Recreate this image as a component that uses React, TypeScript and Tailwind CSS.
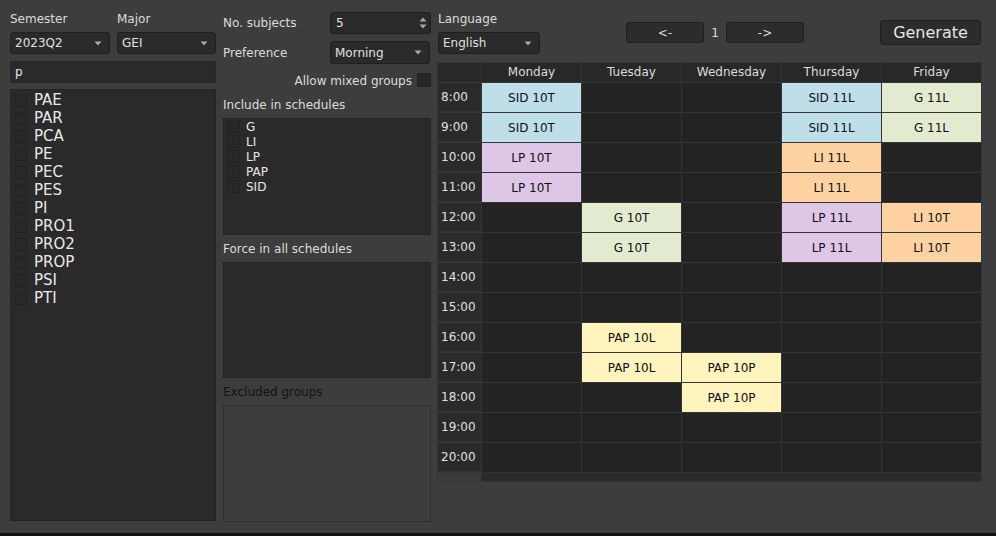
import React from "react";

const hours = ["8:00", "9:00", "10:00", "11:00", "12:00", "13:00", "14:00", "15:00", "16:00", "17:00", "18:00", "19:00", "20:00"];
const days = ["Monday", "Tuesday", "Wednesday", "Thursday", "Friday"];

const colors: Record<string, string> = {
  SID: "bg-[#bedeea]",
  G: "bg-[#e2ebcf]",
  LP: "bg-[#dec7e6]",
  LI: "bg-[#ffd3a1]",
  PAP: "bg-[#fff3be]",
};

// [day][hour index] -> group label
const schedule: Record<number, Record<number, string>> = {
  0: { 0: "SID 10T", 1: "SID 10T", 2: "LP 10T", 3: "LP 10T" },
  1: { 4: "G 10T", 5: "G 10T", 8: "PAP 10L", 9: "PAP 10L" },
  2: { 9: "PAP 10P", 10: "PAP 10P" },
  3: { 0: "SID 11L", 1: "SID 11L", 2: "LI 11L", 3: "LI 11L", 4: "LP 11L", 5: "LP 11L" },
  4: { 0: "G 11L", 1: "G 11L", 4: "LI 10T", 5: "LI 10T" },
};

const subjects = ["PAE", "PAR", "PCA", "PE", "PEC", "PES", "PI", "PRO1", "PRO2", "PROP", "PSI", "PTI"];
const included = ["G", "LI", "LP", "PAP", "SID"];

function Arrow() {
  return (
    <svg width="8" height="5" viewBox="0 0 8 5" className="shrink-0">
      <path d="M0.5 0.5 L7.5 0.5 L4 4.5 Z" fill="#a8a8a8" />
    </svg>
  );
}

function Combo({ value, className }: { value: string; className: string }) {
  return (
    <div className={`flex items-center justify-between h-[22px] pl-[4px] pr-[7px] bg-[#2a2a2a] border border-[#1f1f1f] rounded-[3px] text-[12px] text-[#e0e0e0] ${className}`}>
      <span>{value}</span>
      <Arrow />
    </div>
  );
}

function Check({ size = "w-[13px] h-[13px]" }: { size?: string }) {
  return <div className={`${size} shrink-0 bg-[#282828] border border-[#222222]`} />;
}

export default function App() {
  return (
    <div className="w-[996px] h-[536px] bg-[#3d3d3d] font-['DejaVu_Sans',sans-serif] text-[#dcdcdc] text-[12px] flex flex-col overflow-hidden">
      <div className="flex h-[533px] pl-[10px]">
        {/* left column */}
        <div className="w-[206px] flex flex-col pt-[12px]">
          <div className="flex h-[14px] leading-[14px]">
            <span className="w-[107px]">Semester</span>
            <span>Major</span>
          </div>
          <div className="flex mt-[6px] gap-[7px]">
            <Combo value="2023Q2" className="w-[100px]" />
            <Combo value="GEI" className="w-[99px]" />
          </div>
          <div className="mt-[7px] h-[22px] bg-[#2a2a2a] border border-[#262626] rounded-[2px] pl-[4px] flex items-center text-[12px] text-[#e6e6e6]">
            p
          </div>
          <div className="mt-[6px] h-[432px] bg-[#2a2a2a] border border-[#242424] pt-[1px] pl-[3px]">
            {subjects.map((s) => (
              <div key={s} className="h-[18px] flex items-center gap-[7px]">
                <Check />
                <span className="text-[15px] text-[#e8e8e8] leading-[18px]">{s}</span>
              </div>
            ))}
          </div>
        </div>

        {/* middle column */}
        <div className="w-[208px] ml-[7px] flex flex-col pt-[12px]">
          <div className="flex items-center justify-between h-[22px]">
            <span>No. subjects</span>
            <div className="w-[101px] h-[22px] bg-[#2a2a2a] border border-[#1f1f1f] rounded-[3px] flex items-center justify-between pl-[5px] pr-[3px] text-[#e6e6e6]">
              <span>5</span>
              <svg width="8" height="14" viewBox="0 0 8 14">
                <path d="M0.5 5.5 L7.5 5.5 L4 1.5 Z" fill="#a8a8a8" />
                <path d="M0.5 8.5 L7.5 8.5 L4 12.5 Z" fill="#a8a8a8" />
              </svg>
            </div>
          </div>
          <div className="flex items-center justify-between h-[23px] mt-[7px]">
            <span>Preference</span>
            <Combo value="Morning" className="w-[100px] h-[23px] mr-[1px]" />
          </div>
          <div className="flex items-center justify-end h-[14px] mt-[9px] gap-[5px]">
            <span className="pt-px">Allow mixed groups</span>
            <Check size="w-[14px] h-[14px]" />
          </div>
          <div className="h-[14px] leading-[14px] mt-[11px]">Include in schedules</div>
          <div className="mt-[6px] h-[117px] bg-[#2a2a2a] border border-[#242424] pl-[3px]">
            {included.map((s) => (
              <div key={s} className="h-[15px] flex items-center gap-[6px]">
                <Check />
                <span className="text-[12px] text-[#e8e8e8]">{s}</span>
              </div>
            ))}
          </div>
          <div className="h-[14px] leading-[14px] mt-[7px]">Force in all schedules</div>
          <div className="mt-[6px] h-[116px] bg-[#2a2a2a] border border-[#242424]" />
          <div className="h-[14px] leading-[14px] mt-[7px] text-[#141414]">Excluded groups</div>
          <div className="mt-[6px] h-[117px] border border-[#2e2e2e]" />
        </div>

        {/* right column */}
        <div className="ml-[6px] flex flex-col">
          <div className="flex h-[62px]">
            <div className="flex flex-col pt-[12px] pl-[1px]">
              <span className="h-[14px] leading-[14px]">Language</span>
              <Combo value="English" className="w-[102px] mt-[6px]" />
            </div>
            <div className="flex items-center h-[21px] mt-[22px] ml-[86px]">
              <button className="w-[78px] h-[21px] bg-[#2c2c2c] border border-[#1f1f1f] rounded-[3px] text-[#dcdcdc] text-[12px]">&lt;-</button>
              <span className="w-[22px] text-center">1</span>
              <button className="w-[78px] h-[21px] bg-[#2c2c2c] border border-[#1f1f1f] rounded-[3px] text-[#dcdcdc] text-[12px]">-&gt;</button>
            </div>
            <button className="ml-[76px] mt-[20px] w-[101px] h-[25px] bg-[#2c2c2c] border border-[#1f1f1f] rounded-[3px] text-[16px] text-[#e6e6e6]">
              Generate
            </button>
          </div>

          <div className="grid grid-cols-[43px_repeat(5,99px)] gap-px bg-[#343434] p-px w-[545px]">
            <div className="h-[19px] bg-[#282828]" />
            {days.map((d) => (
              <div key={d} className="h-[19px] pb-[2px] bg-[#282828] flex items-center justify-center text-[#dcdcdc]">
                {d}
              </div>
            ))}
            {hours.map((h, hi) => (
              <React.Fragment key={h}>
                <div className="h-[29px] bg-[#2a2a2a] flex items-center pl-[3px] text-[#e0e0e0] border-t border-[#3a3a3a] -mt-px">
                  {h}
                </div>
                {days.map((d, di) => {
                  const g = schedule[di][hi];
                  const c = g ? colors[g.split(" ")[0]] : "bg-[#232323]";
                  return (
                    <div key={d} className={`h-[29px] ${c} flex items-center justify-center text-[#111111]`}>
                      {g}
                    </div>
                  );
                })}
              </React.Fragment>
            ))}
            <div className="h-[8px] bg-[#3a3a3a]" />
            <div className="h-[8px] col-span-5 bg-[#2a2a2a]" />
          </div>
        </div>
      </div>
      <div className="h-[3px] bg-[#111111]" />
    </div>
  );
}
